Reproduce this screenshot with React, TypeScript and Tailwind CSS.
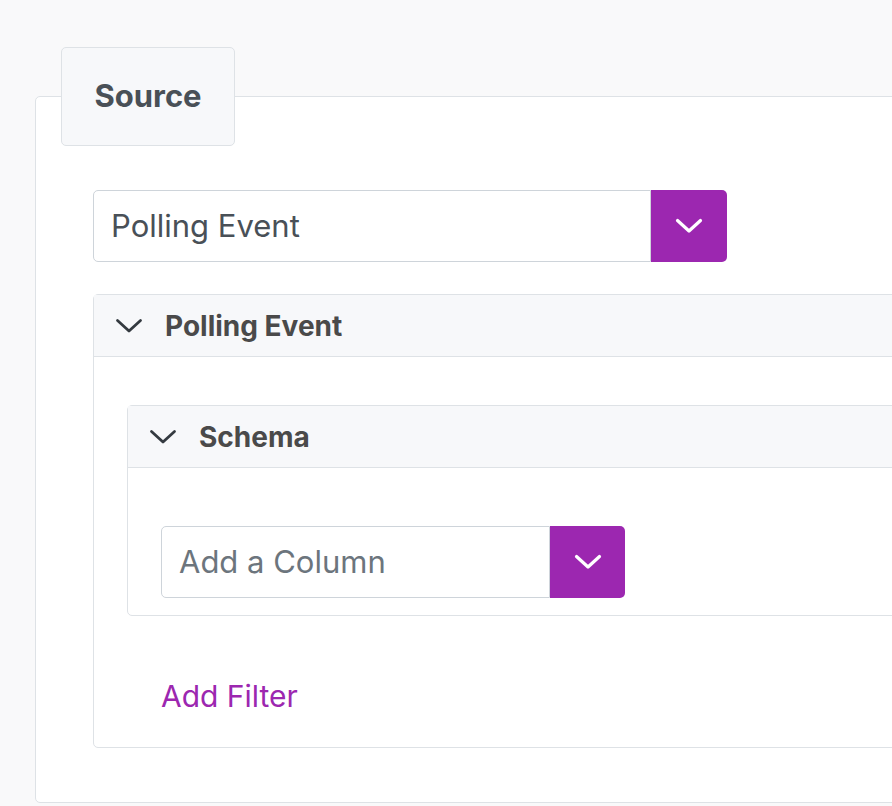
import React from "react";

function Chevron({ className, sw }: { className?: string; sw: number }) {
  return (
    <svg viewBox="0 0 28 16" className={className} fill="none" stroke="currentColor" strokeWidth={sw} strokeLinecap="round" strokeLinejoin="round">
      <path d="M2.5 2.5 L14 13 L25.5 2.5" />
    </svg>
  );
}

function SelectBox({ text, placeholder, inputW, btnW }: { text: string; placeholder?: boolean; inputW: string; btnW: string }) {
  return (
    <div className="flex h-[72px]">
      <div className={`${inputW} flex items-center rounded-l-[5px] border border-[#ced4da] bg-white pl-[17px] text-[31px] ${placeholder ? "text-[#6c757d]" : "text-[#495057]"}`}>
        {text}
      </div>
      <div className={`${btnW} flex items-center justify-center rounded-r-[5px] bg-[#9c27b0] text-white`}>
        <Chevron className="w-[28px] h-[16px]" sw={3.2} />
      </div>
    </div>
  );
}

function Accordion({ title, children, bodyClass }: { title: string; children: React.ReactNode; bodyClass: string }) {
  return (
    <div className="w-[900px] rounded-[5px] border border-[#dee2e6] bg-white">
      <div className="flex h-[62px] items-center gap-[22px] border-b border-[#dee2e6] bg-[#f7f8fa] pl-[21px] text-[#343a40]">
        <Chevron className="w-[28px] h-[16px]" sw={2.8} />
        <span className="text-[28px] font-bold text-[#4a4a4a]">{title}</span>
      </div>
      <div className={bodyClass}>{children}</div>
    </div>
  );
}

export default function App() {
  return (
    <div className="h-[806px] w-[892px] overflow-hidden bg-[#f9f9fa] pl-[35px] pt-[96px]" style={{ fontFamily: "Inter, 'Liberation Sans', sans-serif" }}>
      <div className="w-[900px] h-[707px] rounded-[5px] border border-[#dee2e6] bg-white">
        <div className="-mt-[50px] ml-[25px] flex h-[99px] w-[174px] items-center justify-center rounded-[5px] border border-[#dee2e6] bg-[#f7f8fa]">
          <span className="text-[31px] font-bold text-[#495057]">Source</span>
        </div>
        <div className="pl-[57px] pt-[44px]">
          <SelectBox text="Polling Event" inputW="w-[558px]" btnW="w-[76px]" />
          <div className="mt-[32px]">
            <Accordion title="Polling Event" bodyClass="pl-[33px] pt-[48px]">
              <Accordion title="Schema" bodyClass="pl-[33px] pt-[58px] pb-[17px]">
                <SelectBox text="Add a Column" placeholder inputW="w-[389px]" btnW="w-[75px]" />
              </Accordion>
              <div className="h-[131px] pl-[34px] pt-[65px] text-[30px] leading-[30px] text-[#9c27b0]">Add Filter</div>
            </Accordion>
          </div>
        </div>
      </div>
    </div>
  );
}
